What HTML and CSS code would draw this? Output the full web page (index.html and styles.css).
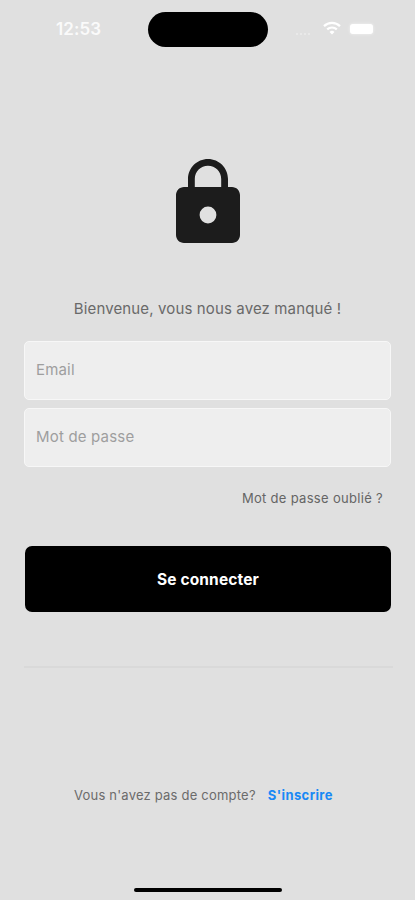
FILE: index.html
```html
<!DOCTYPE html>
<html lang="fr">
<head>
<meta charset="utf-8">
<title>Connexion</title>
<link rel="stylesheet" href="styles.css">
</head>
<body>
<div class="screen">
  <header class="status">
    <div class="time">12:53</div>
    <div class="island"></div>
    <div class="indicators">
      <div class="signal"><i></i><i></i><i></i><i></i></div>
      <svg class="wifi" width="18" height="14" viewBox="0 0 18 14"><g fill="none" stroke="#fff" stroke-width="2.2"><path d="M1 5.1a11.6 11.6 0 0 1 16 0"/><path d="M4.2 8.4a7 7 0 0 1 9.6 0"/></g><path fill="#fff" d="M6.5 10.9a3.7 3.7 0 0 1 5 0L9 13.5z"/></svg>
      <div class="battery"></div>
    </div>
  </header>
  <main class="content">
    <svg class="lock" width="96" height="96" viewBox="0 0 24 24"><path d="M18 8h-1V6c0-2.76-2.24-5-5-5S7 3.24 7 6v2H6c-1.1 0-2 .9-2 2v10c0 1.1.9 2 2 2h12c1.1 0 2-.9 2-2V10c0-1.1-.9-2-2-2zm-6 9.1a2.1 2.1 0 1 1 0-4.2 2.1 2.1 0 0 1 0 4.2zM15.3 8H8.7V6c0-1.82 1.48-3.3 3.3-3.3s3.3 1.48 3.3 3.3v2z"/></svg>
    <p class="welcome">Bienvenue, vous nous avez manqué !</p>
    <input class="field" type="email" placeholder="Email">
    <input class="field" type="password" placeholder="Mot de passe">
    <a class="forgot">Mot de passe oublié ?</a>
    <button class="submit">Se connecter</button>
    <div class="divider"></div>
    <footer class="signup">
      <span>Vous n'avez pas de compte?</span>
      <a class="link">S'inscrire</a>
    </footer>
  </main>
  <div class="home"></div>
</div>
</body>
</html>
```
FILE: styles.css
```css
* { box-sizing: border-box; }
body { margin: 0; background: #e0e0e0; font-family: Inter, "Liberation Sans", sans-serif; }
svg { display: block; flex: none; }
.screen { width: 415px; height: 900px; display: flex; flex-direction: column; overflow: hidden; }
.status { display: grid; grid-template-columns: 148px 120px 147px; height: 58px; align-items: center; }
.time { padding-left: 56px; font-size: 17px; line-height: 20px; font-weight: 600; letter-spacing: .1px; color: #fafafa; }
.island { height: 35px; border-radius: 18px; background: #000; }
.indicators { display: flex; align-items: center; padding-left: 28px; }
.signal { display: flex; gap: 2px; width: 17px; padding-top: 9px; margin-right: 10px; }
.signal i { width: 2px; height: 2px; background: #e9e9e9; }
.wifi { margin-top: -2px; }
.battery { width: 23px; height: 10px; margin: -1px 0 0 9px; border-radius: 3px; background: #fff; box-shadow: 0 0 3px #f4f4f4; }
.content { display: flex; flex-direction: column; padding: 97px 24px 0; }
.lock { align-self: center; fill: #1c1c1c; }
.welcome { align-self: center; margin: 46px 0 20px; font-size: 15px; line-height: 24px; letter-spacing: .13px; white-space: nowrap; color: #696969; }
.field { width: 367px; height: 59px; margin: 0 0 8px; padding: 0 12px 2px 11px; border: 1.5px solid #f7f7f7; border-radius: 5px; background: #eee; font: 15px Inter, "Liberation Sans", sans-serif; letter-spacing: .18px; }
.field::placeholder { color: #9e9e9e; opacity: 1; }
.forgot { align-self: flex-end; margin: 13px 8px 0 0; font-size: 13px; line-height: 20px; letter-spacing: .31px; color: #656565; }
.submit { width: 366px; height: 66px; margin: 38px 0 0 1px; padding: 1px 0 0; border: 0; border-radius: 7px; background: #000; font: 700 15.5px Inter, "Liberation Sans", sans-serif; letter-spacing: .13px; color: #fff; }
.divider { height: 2px; margin: 54px -2px 0 0; background: #d9d9d9; }
.signup { display: flex; gap: 12px; margin: 117px 0 0 50px; font-size: 13px; line-height: 20px; letter-spacing: .21px; white-space: nowrap; color: #6b6b6b; }
.link { font-weight: 700; letter-spacing: .4px; color: #1989f5; }
.home { width: 148px; height: 4px; margin: auto auto 8px 134px; border-radius: 2px; background: #000; }
```
